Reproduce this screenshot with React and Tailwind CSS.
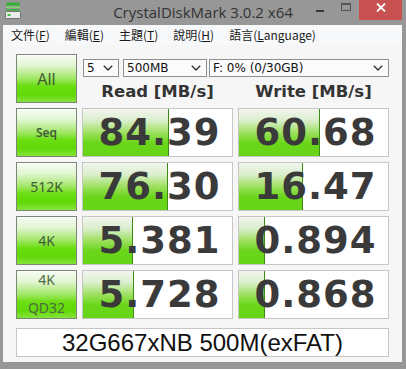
import { Fragment } from 'react';

const rows = [
  { label: ['Seq'], bold: true, read: '84.39', rw: 86, write: '60.68', ww: 81 },
  { label: ['512K'], read: '76.30', rw: 85, write: '16.47', ww: 64 },
  { label: ['4K'], read: '5.381', rw: 50, write: '0.894', ww: 26 },
  { label: ['4K', 'QD32'], read: '5.728', rw: 51, write: '0.868', ww: 26 },
];

const menus = [
  ['文件(', 'F', ')'],
  ['編輯(', 'E', ')'],
  ['主題(', 'T', ')'],
  ['說明(', 'H', ')'],
  ['語言(', 'L', 'anguage)'],
];

function AppIcon() {
  return (
    <svg width="16" height="17" viewBox="0 0 16 17">
      <rect x="1" y="0.5" width="14" height="3" rx="1.5" fill="#35b035" />
      <rect x="1" y="4.5" width="14" height="1.5" fill="#7fd66f" />
      <rect x="1" y="7" width="14" height="1.5" fill="#35b035" />
      <rect x="0.5" y="9.5" width="15" height="7" rx="1" fill="#e9ecea" stroke="#6d756f" />
      <rect x="2.5" y="12" width="3" height="2" fill="#3cc23c" />
    </svg>
  );
}

function Chevron() {
  return (
    <svg width="10" height="6" viewBox="0 0 10 6" className="shrink-0">
      <polyline points="0.8,0.8 5,5 9.2,0.8" fill="none" stroke="#333" strokeWidth="1.4" />
    </svg>
  );
}

function Select({ value, className }) {
  return (
    <div
      className={`h-[18px] flex items-center justify-between pl-[3px] pr-[5px] bg-[#fbfbfb] border border-[#8f8f8f] font-['DejaVu_Sans',sans-serif] text-[12px] text-[#111] leading-none ${className}`}
    >
      <span>{value}</span>
      <Chevron />
    </div>
  );
}

function GreenButton({ children, className = '' }) {
  return (
    <div
      className={`h-[49px] flex flex-col items-center border border-[#7b8775] bg-[linear-gradient(to_bottom,#f7fcf4_0%,#e2f6d4_22%,#a6e86e_48%,#6ade10_66%,#62d808_84%,#86e43c_100%)] shadow-[inset_0_1px_0_#ffffff] font-['Noto_Sans',sans-serif] text-[#3f5c34] ${className}`}
    >
      {children}
    </div>
  );
}

function ValueCell({ value, bar }) {
  return (
    <div className="relative h-[49px] bg-white border border-[#c6c6c6] overflow-hidden">
      <div
        className="absolute left-0 top-0 bottom-0 border-r border-[#3d8a14] bg-[linear-gradient(to_bottom,#f1f5ee_0%,#dcefcf_24%,#9ee060_50%,#6ad61a_72%,#68d418_100%)]"
        style={{ width: bar }}
      />
      <div className="relative h-full flex items-center justify-center pl-[4px] font-['DejaVu_Sans',sans-serif] font-bold text-[37px] tracking-[1px] text-[#3a3a3a] leading-none">
        {value}
      </div>
    </div>
  );
}

export default function App() {
  return (
    <div className="w-[406px] h-[369px] bg-[#979797] flex flex-col overflow-hidden">
      {/* Title bar */}
      <div className="h-[25px] flex shrink-0">
        <div className="w-[99px] pl-[5px] pt-[2px]">
          <AppIcon />
        </div>
        <div className="flex-1 text-center pt-[1px] font-['Open_Sans',sans-serif] text-[15px] leading-[22px] text-[#333]">
          CrystalDiskMark 3.0.2 x64
        </div>
        <div className="w-[99px] flex items-start pr-[4px]">
          <div className="w-[26px] h-[20px] flex justify-center pt-[10px]">
            <div className="w-[8px] h-[2px] bg-[#3a3a3a]" />
          </div>
          <div className="w-[26px] h-[20px] flex justify-center pt-[3px]">
            <div className="w-[10px] h-[8px] border border-[#555] border-t-2" />
          </div>
          <div className="w-[43px] h-[20px] bg-[#c75050] flex justify-center pt-[3px]">
            <svg width="10" height="9" viewBox="0 0 10 9">
              <path d="M1 0.5 L9 8.5 M9 0.5 L1 8.5" stroke="#fff" strokeWidth="1.8" />
            </svg>
          </div>
        </div>
      </div>

      <div className="flex-1 ml-[3px] mr-[4px] mb-[7px] flex flex-col bg-[#f6f6f6]">
        {/* Menu bar */}
        <div className="h-[20px] flex items-center gap-[15px] pl-[8px] bg-[#f7f8f9] font-['Noto_Sans_CJK_TC',sans-serif] text-[12px] text-[#1a1a1a] leading-none">
          {menus.map((m) => (
            <span key={m[1]}>
              {m[0]}
              <span className="underline underline-offset-1">{m[1]}</span>
              {m[2]}
            </span>
          ))}
        </div>

        {/* Content */}
        <div className="flex-1 px-[13px] pt-[9px]">
          <div className="grid grid-cols-[61px_151px_151px] gap-x-[5px] gap-y-[5px]">
            <GreenButton className="justify-center text-[16px] leading-none">All</GreenButton>
            <div className="col-span-2 flex flex-col">
              <div className="flex mt-[5px] ml-[1px]">
                <Select value="5" className="w-[36px]" />
                <Select value="500MB" className="w-[84px] ml-[4px]" />
                <Select value="F: 0% (0/30GB)" className="flex-1 ml-[2px]" />
              </div>
              <div className="flex gap-[5px] mt-[5px] font-['DejaVu_Sans',sans-serif] font-bold text-[16.5px] text-[#343434] leading-[20px]">
                <div className="w-[151px] text-center">Read [MB/s]</div>
                <div className="w-[151px] text-center">Write [MB/s]</div>
              </div>
            </div>

            {rows.map((r) => (
              <Fragment key={r.read}>
                {r.label.length > 1 ? (
                  <GreenButton className="justify-between pb-[2px] text-[14px] leading-[17px] text-[#4d6a40]">
                    {r.label.map((l) => (
                      <span key={l}>{l}</span>
                    ))}
                  </GreenButton>
                ) : (
                  <GreenButton
                    className={`justify-center leading-none ${r.bold ? 'text-[12px] font-semibold' : 'text-[14px]'}`}
                  >
                    {r.label[0]}
                  </GreenButton>
                )}
                <ValueCell value={r.read} bar={r.rw} />
                <ValueCell value={r.write} bar={r.ww} />
              </Fragment>
            ))}
          </div>

          <div className="mt-[9px] h-[29px] bg-white border border-[#c6c6c6] flex items-center justify-center font-['Liberation_Sans',Arial,sans-serif] text-[24px] text-[#111] leading-none">
            32G667xNB 500M(exFAT)
          </div>
        </div>
      </div>
    </div>
  );
}
